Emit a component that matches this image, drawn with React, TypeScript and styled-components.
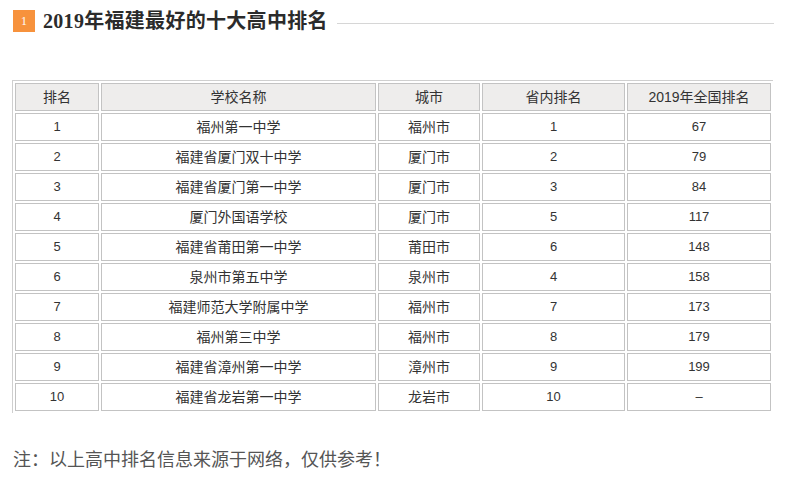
import styled, { createGlobalStyle } from 'styled-components';

const GlobalStyle = createGlobalStyle`
    html, body {
        margin: 0;
        padding: 0;
        background: #fff;
    }
    body {
        font-family: "Liberation Sans", "Noto Sans CJK SC", sans-serif;
        color: #333;
    }
`;

const Page = styled.div`
    width: 800px;
    height: 482px;
    padding: 10px 0 0 12px;
    box-sizing: border-box;
`;

const TitleBar = styled.div`
    display: flex;
    align-items: center;
    height: 22px;
    width: 761px;
    margin-left: 1px;
`;

const Badge = styled.span`
    display: flex;
    align-items: center;
    justify-content: center;
    width: 22px;
    height: 22px;
    flex: none;
    background: #f7923c;
    color: #fff;
    font-family: "Liberation Serif", serif;
    font-size: 12px;
`;

const Title = styled.h2`
    margin: 0 0 0 8px;
    font-family: "Liberation Serif", "Noto Sans CJK SC", serif;
    font-size: 20px;
    font-weight: 700;
    letter-spacing: 0.3px;
    line-height: 22px;
    color: #2b2b2b;
    white-space: nowrap;
`;

const Rule = styled.span`
    flex: 1;
    height: 1px;
    margin-left: 9px;
    margin-top: 5px;
    background: #d6d6d6;
`;

const Table = styled.table`
    margin-top: 48px;
    border-collapse: separate;
    border-spacing: 2px;
    border-top: 1px solid #cfcfcf;
    border-left: 1px solid #cfcfcf;
    font-size: 14px;
    color: #333;
`;

const Cell = styled.td<{ $w?: number; $num?: boolean }>`
    box-sizing: border-box;
    ${({ $w }) => ($w ? `width: ${$w}px;` : '')}
    height: 28px;
    padding: 0;
    border: 1px solid #c3c3c3;
    text-align: center;
    font-size: ${({ $num }) => ($num ? '13px' : '14px')};
    line-height: 26px;
    white-space: nowrap;
`;

const HeadCell = styled(Cell).attrs({ as: 'th' })`
    background: #eeedec;
    font-weight: 400;
`;

const Note = styled.p`
    margin: 37px 0 0 1px;
    font-family: "Liberation Serif", "Noto Sans CJK SC", serif;
    font-size: 18px;
    line-height: 20px;
    color: #555;
`;

const widths = [84, 275, 102, 143, 144];
const heads = ['排名', '学校名称', '城市', '省内排名', '2019年全国排名'];

const rows: [string, string, string, string, string][] = [
    ['1', '福州第一中学', '福州市', '1', '67'],
    ['2', '福建省厦门双十中学', '厦门市', '2', '79'],
    ['3', '福建省厦门第一中学', '厦门市', '3', '84'],
    ['4', '厦门外国语学校', '厦门市', '5', '117'],
    ['5', '福建省莆田第一中学', '莆田市', '6', '148'],
    ['6', '泉州市第五中学', '泉州市', '4', '158'],
    ['7', '福建师范大学附属中学', '福州市', '7', '173'],
    ['8', '福州第三中学', '福州市', '8', '179'],
    ['9', '福建省漳州第一中学', '漳州市', '9', '199'],
    ['10', '福建省龙岩第一中学', '龙岩市', '10', '–'],
];

const isNum = (v: string) => /^[\d–]+$/.test(v);

const App = () => (
    <>
        <GlobalStyle />
        <Page>
            <TitleBar>
                <Badge>1</Badge>
                <Title>2019年福建最好的十大高中排名</Title>
                <Rule />
            </TitleBar>
            <Table>
                <thead>
                    <tr>
                        {heads.map((h, i) => (
                            <HeadCell key={h} $w={widths[i]}>{h}</HeadCell>
                        ))}
                    </tr>
                </thead>
                <tbody>
                    {rows.map((r) => (
                        <tr key={r[0]}>
                            {r.map((v, i) => (
                                <Cell key={i} $num={isNum(v)}>{v}</Cell>
                            ))}
                        </tr>
                    ))}
                </tbody>
            </Table>
            <Note>注：以上高中排名信息来源于网络，仅供参考！</Note>
        </Page>
    </>
);

export default App;
